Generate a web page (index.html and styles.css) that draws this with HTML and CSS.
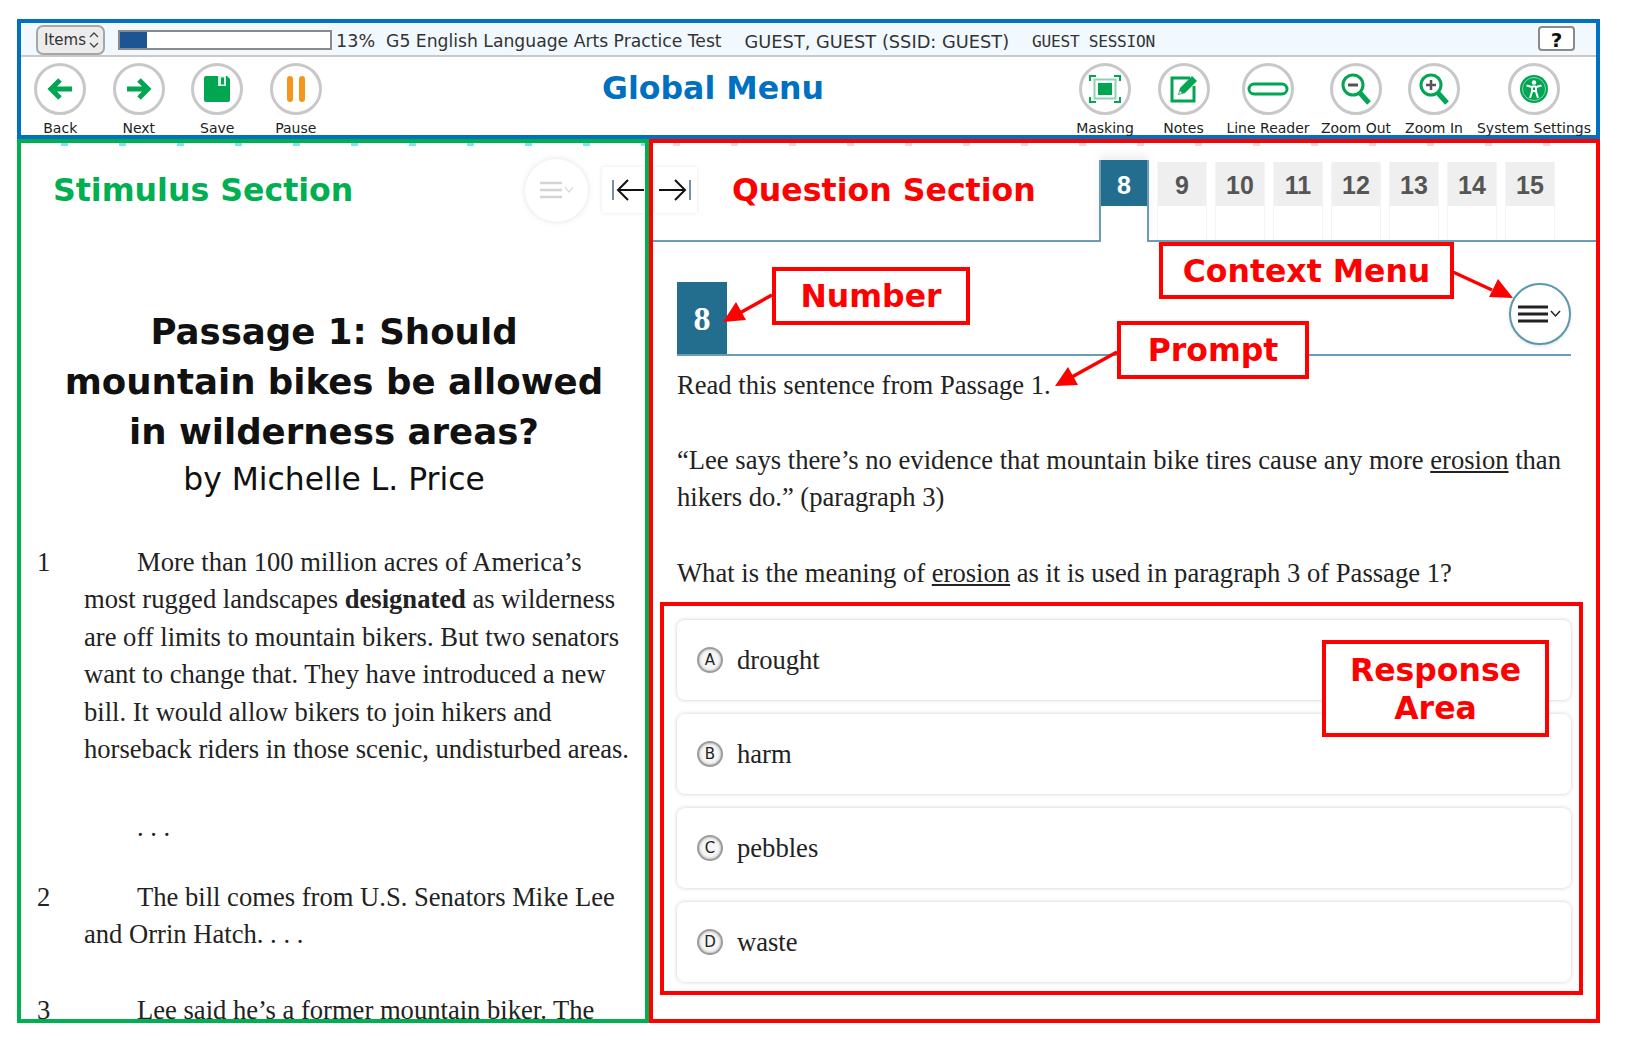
FILE: index.html
```html
<!DOCTYPE html>
<html lang="en">
<head>
    <meta charset="UTF-8">
    <meta name="viewport" content="width=device-width, initial-scale=1.0">
    <title>G5 English Language Arts Practice Test</title>
    <link rel="stylesheet" href="styles.css">
</head>
<body>
    <div class="page">
        <header class="global">
            <div class="info-bar">
                <button class="items-btn">Items
                    <svg width="12" height="20" viewBox="0 0 12 20"><path d="M2 7l4-4 4 4M2 13l4 4 4-4" fill="none" stroke="#444" stroke-width="1.3"/></svg>
                </button>
                <div class="progress"><div class="progress-fill"></div></div>
                <span class="pct">13%</span>
                <span class="test-name">G5 English Language Arts Practice Test</span>
                <span class="student">GUEST, GUEST (SSID: GUEST)</span>
                <span class="session">GUEST SESSION</span>
                <button class="help-btn">?</button>
            </div>
            <div class="toolbar">
                <div class="tools-left">
                    <div class="tool">
                        <div class="tool-circle"><svg width="30" height="30" viewBox="0 0 30 30"><path d="M27 15H7M15 6l-9 9 9 9" fill="none" stroke="#00a651" stroke-width="5"/></svg></div>
                        <span>Back</span>
                    </div>
                    <div class="tool">
                        <div class="tool-circle"><svg width="30" height="30" viewBox="0 0 30 30"><path d="M3 15h20M15 6l9 9-9 9" fill="none" stroke="#00a651" stroke-width="5"/></svg></div>
                        <span>Next</span>
                    </div>
                    <div class="tool">
                        <div class="tool-circle"><svg width="30" height="30" viewBox="0 0 30 30"><path d="M2 4a2 2 0 0 1 2-2h21l3 3v21a2 2 0 0 1-2 2H4a2 2 0 0 1-2-2z" fill="#00a651"/><path d="M16 2h8v10h-8z" fill="#d9f2e4"/><path d="M19 3.500h3v7h-3z" fill="#00a651"/></svg></div>
                        <span>Save</span>
                    </div>
                    <div class="tool">
                        <div class="tool-circle"><svg width="30" height="30" viewBox="0 0 30 30"><rect x="6" y="2" width="6" height="26" rx="3" fill="#f7941d"/><rect x="18" y="2" width="6" height="26" rx="3" fill="#f7941d"/></svg></div>
                        <span>Pause</span>
                    </div>
                </div>
                <div class="global-title">Global Menu</div>
                <div class="tools-right">
                    <div class="tool">
                        <div class="tool-circle"><svg width="34" height="30" viewBox="0 0 34 30"><path d="M2 7V2h6M26 2h6v5M32 23v5h-6M8 28H2v-5" fill="none" stroke="#00a651" stroke-width="2"/><rect x="6.500" y="5.500" width="21" height="19" fill="none" stroke="#8fd3ae" stroke-width="2"/><rect x="10" y="9" width="14" height="12" fill="#00a651"/></svg></div>
                        <span>Masking</span>
                    </div>
                    <div class="tool">
                        <div class="tool-circle"><svg width="32" height="32" viewBox="0 0 32 32"><path d="M22 5H4v23h22V13" fill="none" stroke="#00a651" stroke-width="3"/><path d="M10 22l2-7L24 3l5 5-12 12z" fill="#00a651"/><path d="M11 21l1-3 2 2z" fill="#fff"/></svg></div>
                        <span>Notes</span>
                    </div>
                    <div class="tool">
                        <div class="tool-circle"><svg width="42" height="16" viewBox="0 0 42 16"><rect x="2" y="3" width="38" height="10" rx="5" fill="#fff" stroke="#00a651" stroke-width="3"/></svg></div>
                        <span>Line Reader</span>
                    </div>
                    <div class="tool">
                        <div class="tool-circle"><svg width="32" height="34" viewBox="0 0 32 34"><circle cx="13" cy="13" r="10" fill="none" stroke="#00a651" stroke-width="3"/><path d="M8 13h10" stroke="#555" stroke-width="3"/><path d="M20 21l9 10" stroke="#00a651" stroke-width="5"/></svg></div>
                        <span>Zoom Out</span>
                    </div>
                    <div class="tool">
                        <div class="tool-circle"><svg width="32" height="34" viewBox="0 0 32 34"><circle cx="13" cy="13" r="10" fill="none" stroke="#00a651" stroke-width="3"/><path d="M8 13h10M13 8v10" stroke="#555" stroke-width="2.500"/><path d="M20 21l9 10" stroke="#00a651" stroke-width="5"/></svg></div>
                        <span>Zoom In</span>
                    </div>
                    <div class="tool">
                        <div class="tool-circle"><svg width="30" height="30" viewBox="0 0 30 30"><circle cx="15" cy="15" r="14" fill="#00a651"/><circle cx="15" cy="15" r="11.500" fill="none" stroke="#8fd3ae"/><circle cx="15" cy="8.500" r="2.200" fill="#fff"/><path d="M7.500 11.500l5.500 1.500v4.500L11 24M22.500 11.500L17 13v4.500L19 24M13 12.500h4M13 17h4" fill="none" stroke="#fff" stroke-width="2"/></svg></div>
                        <span>System Settings</span>
                    </div>
                </div>
            </div>
        </header>

        <main class="main">
            <section class="stimulus">
                <div class="section-head">
                    <h2 class="stimulus-title">Stimulus Section</h2>
                    <div class="ghost-menu">
                        <svg width="34" height="18" viewBox="0 0 34 18"><path d="M0 2h22M0 9h22M0 16h22" stroke="#d4d4d4" stroke-width="2.500"/><path d="M25 6l4 5 4-5" fill="none" stroke="#d4d4d4" stroke-width="1.200"/></svg>
                    </div>
                    <div class="collapse-btn">
                        <svg width="34" height="26" viewBox="0 0 34 26"><path d="M2 3v20" stroke="#4a6a8a" stroke-width="1.500"/><path d="M33 13H7M17 3L7 13l10 10" fill="none" stroke="#111" stroke-width="2"/></svg>
                    </div>
                </div>
                <div class="passage-head">
                    <h1>Passage 1: Should<br>mountain bikes be allowed<br>in wilderness areas?</h1>
                    <p>by Michelle L. Price</p>
                </div>
                <div class="para">
                    <span>1</span>
                    <p>More than 100 million acres of America’s<br>most rugged landscapes <b>designated</b> as wilderness<br>are off limits to mountain bikers. But two senators<br>want to change that. They have introduced a new<br>bill. It would allow bikers to join hikers and<br>horseback riders in those scenic, undisturbed areas.</p>
                </div>
                <div class="para ellipsis">
                    <span></span>
                    <p>. . .</p>
                </div>
                <div class="para">
                    <span>2</span>
                    <p>The bill comes from U.S. Senators Mike Lee<br>and Orrin Hatch. . . .</p>
                </div>
                <div class="para">
                    <span>3</span>
                    <p>Lee said he’s a former mountain biker. The</p>
                </div>
            </section>

            <section class="question">
                <div class="question-top">
                    <div class="collapse-btn right">
                        <svg width="36" height="26" viewBox="0 0 34 26"><path d="M32 3v20" stroke="#4a6a8a" stroke-width="1.500"/><path d="M1 13h26M17 3l10 10-10 10" fill="none" stroke="#111" stroke-width="2"/></svg>
                    </div>
                    <h2 class="question-title">Question Section</h2>
                    <div class="tabs">
                        <div class="tab active"><b>8</b></div>
                        <div class="tab"><b>9</b></div>
                        <div class="tab"><b>10</b></div>
                        <div class="tab"><b>11</b></div>
                        <div class="tab"><b>12</b></div>
                        <div class="tab"><b>13</b></div>
                        <div class="tab"><b>14</b></div>
                        <div class="tab"><b>15</b></div>
                    </div>
                </div>
                <div class="question-body">
                    <div class="number-row">
                        <div class="number">8</div>
                        <div class="context-btn">
                            <svg width="44" height="20" viewBox="0 0 44 20"><path d="M0 3h30M0 10h30M0 17h30" stroke="#222" stroke-width="3"/><path d="M33 7l4.500 5 4.500-5" fill="none" stroke="#222" stroke-width="1.500"/></svg>
                        </div>
                    </div>
                    <div class="prompt">
                        <p>Read this sentence from Passage 1.</p>
                        <p>“Lee says there’s no evidence that mountain bike tires cause any more <u>erosion</u> than hikers do.” (paragraph 3)</p>
                        <p>What is the meaning of <u>erosion</u> as it is used in paragraph 3 of Passage 1?</p>
                    </div>
                </div>
                <div class="response-area">
                    <div class="option"><span class="radio">A</span>drought</div>
                    <div class="option"><span class="radio">B</span>harm</div>
                    <div class="option"><span class="radio">C</span>pebbles</div>
                    <div class="option"><span class="radio">D</span>waste</div>
                </div>
            </section>
        </main>

        <div class="callout callout-number">Number</div>
        <div class="callout callout-context">Context Menu</div>
        <div class="callout callout-prompt">Prompt</div>
        <div class="callout callout-response">Response<br>Area</div>
        <svg class="arrows" width="1638" height="1040" viewBox="0 0 1638 1040">
            <path d="M772 295L738 314" stroke="#f00" stroke-width="3.500"/>
            <path d="M723 322l13-20 10 18z" fill="#f00"/>
            <path d="M1453 272L1492 290" stroke="#f00" stroke-width="3.500"/>
            <path d="M1513 298l-24-1 9-18z" fill="#f00"/>
            <path d="M1117 352L1070 378" stroke="#f00" stroke-width="3.500"/>
            <path d="M1055 386l13-19 10 18z" fill="#f00"/>
        </svg>
    </div>
</body>
</html>
```

FILE: styles.css
```css
* {
    box-sizing: border-box;
}
body {
    margin: 0;
    background-color: #fff;
    font-family: "DejaVu Sans", sans-serif;
    color: #222;
}
h1, h2, p {
    margin: 0;
}
.page {
    position: relative;
    width: 1638px;
    height: 1040px;
    padding: 19px 38px 0 17px;
    overflow: hidden;
}

/* global menu */
.global {
    height: 120px;
    border: 4px solid #0070c0;
}
.info-bar {
    display: flex;
    align-items: center;
    height: 34px;
    padding: 2px 21px 0 15px;
    background-color: #f1f9fe;
    border-bottom: 2px solid #c9c9c9;
    font-size: 17.200px;
    color: #333;
}
.info-bar span {
    padding-top: 2px;
}
.items-btn {
    display: flex;
    align-items: center;
    justify-content: space-between;
    width: 69px;
    height: 30px;
    margin-top: -1px;
    padding: 0 3px 0 6px;
    font: 15px "DejaVu Sans", sans-serif;
    color: #333;
    background-color: #ececec;
    border: 2px solid #a6a6a6;
    border-radius: 7px;
}
.progress {
    width: 214px;
    height: 20px;
    margin-left: 13px;
    background-color: #fff;
    border: 2px solid #8a8a8a;
}
.progress-fill {
    width: 13%;
    height: 100%;
    background-color: #1d5493;
}
.pct {
    margin-left: 4px;
    font-size: 17.600px;
}
.test-name {
    margin-left: 11px;
}
.student {
    margin-left: 23px;
    font-size: 17.800px;
}
.session {
    margin-left: 23px;
    font-family: "DejaVu Sans Mono", monospace;
    font-size: 16.200px;
    letter-spacing: -0.300px;
}
.help-btn {
    width: 37px;
    height: 25px;
    margin: 0 0 3px auto;
    padding: 0;
    font: bold 20px "DejaVu Sans", sans-serif;
    color: #111;
    background-color: #fff;
    border: 2px solid #8a8a8a;
    border-radius: 4px;
}
.toolbar {
    display: flex;
    height: 78px;
    padding: 6px 4px 0 0;
}
.tools-left {
    display: grid;
    grid-template-columns: repeat(4, 78.500px);
}
.global-title {
    flex: 1;
    padding: 5px 0 0 267px;
    font-size: 31.600px;
    font-weight: bold;
    line-height: 40px;
    color: #0070c0;
}
.tools-right {
    display: grid;
    grid-template-columns: 92px 65px 104px 72px 84px 116px;
}
.tool {
    display: flex;
    flex-direction: column;
    align-items: center;
    font-size: 14px;
    line-height: 16px;
    color: #222;
    white-space: nowrap;
}
.tool-circle {
    display: flex;
    align-items: center;
    justify-content: center;
    width: 52px;
    height: 52px;
    margin-bottom: 5px;
    background-color: #fff;
    border: 3px solid #c8c8c8;
    border-radius: 50%;
}

/* main two panes */
.main {
    display: flex;
    height: 884px;
}
.stimulus {
    width: 632px;
    padding: 0 0 0 16px;
    overflow: hidden;
    background: repeating-linear-gradient(90deg, #7fe3f5 0 7px, transparent 7px 58px) 40px 0 / 100% 3px no-repeat;
    border: 4px solid #00b050;
}
.section-head {
    display: flex;
    align-items: center;
    height: 94px;
    padding: 0 0 0 16px;
}
.stimulus-title,
.question-title {
    font-size: 31.600px;
    font-weight: bold;
    white-space: nowrap;
}
.stimulus-title {
    flex: 1;
    color: #00b050;
}
.ghost-menu {
    display: flex;
    align-items: center;
    justify-content: center;
    width: 63px;
    height: 63px;
    margin-right: 14px;
    border-radius: 50%;
    box-shadow: 0 0 6px rgba(0, 0, 0, 0.12);
}
.collapse-btn {
    display: flex;
    align-items: center;
    flex-shrink: 0;
    width: 43px;
    height: 46px;
    padding-left: 9px;
    background-color: #fff;
    box-shadow: 0 0 4px rgba(0, 0, 0, 0.1);
}
.passage-head {
    width: 600px;
    margin-top: 70px;
    padding-right: 6px;
    text-align: center;
    color: #111;
}
.passage-head h1 {
    font-size: 35.600px;
    line-height: 50px;
}
.passage-head p {
    font-size: 31.400px;
    line-height: 45px;
}
.para {
    display: grid;
    grid-template-columns: 47px 1fr;
    margin-bottom: 38px;
    font-family: "Liberation Serif", serif;
    font-size: 26.600px;
    line-height: 37.400px;
    color: #222;
    white-space: nowrap;
}
.para p {
    text-indent: 53px;
}
.passage-head + .para {
    margin-top: 42px;
}
.ellipsis {
    margin-top: 41px;
    margin-bottom: 32px;
}

/* question pane */
.question {
    flex: 1;
    background: repeating-linear-gradient(90deg, #dddddd 0 7px, transparent 7px 58px) 20px 0 / 100% 3px no-repeat;
    border: 4px solid #f00;
}
.question-top {
    position: relative;
    display: flex;
    height: 99px;
    padding: 17px 0 0 79px;
    border-bottom: 2px solid #6a9db5;
}
.question-top .collapse-btn.right {
    position: absolute;
    top: 24px;
    left: 2px;
    width: 42px;
    padding-left: 2px;
}
.question-title {
    width: 367px;
    margin-top: 12px;
    color: #f00;
}
.tabs {
    display: flex;
    gap: 8px;
    height: 80px;
}
.tab {
    width: 50px;
    height: 78px;
    margin-top: 2px;
    text-align: center;
    font-family: "Liberation Sans", sans-serif;
    font-size: 25px;
    line-height: 46px;
    color: #555;
    background: linear-gradient(#efefef 44px, #fff 44px);
    border-left: 1px solid #f4f4f4;
    border-right: 1px solid #f4f4f4;
}
.tab.active {
    height: 82px;
    margin-top: 0;
    line-height: 50px;
    color: #fff;
    background: linear-gradient(#236e8e 46px, #fff 46px);
    border-left: 2px solid #6a9db5;
    border-right: 2px solid #6a9db5;
    box-shadow: 0 -6px 8px rgba(0, 0, 0, 0.06);
}
.question-body {
    padding: 40px 25px 0 24px;
}
.number-row {
    display: flex;
    justify-content: space-between;
    height: 74px;
    border-bottom: 2px solid #6a9db5;
}
.number {
    display: flex;
    align-items: center;
    justify-content: center;
    width: 50px;
    height: 72px;
    padding-top: 2px;
    font-family: "Liberation Serif", serif;
    font-size: 34px;
    font-weight: bold;
    color: #fff;
    background-color: #236e8e;
}
.context-btn {
    display: flex;
    align-items: center;
    justify-content: center;
    width: 62px;
    height: 62px;
    margin-top: 1px;
    background-color: #fff;
    border: 2px solid #5b97ae;
    border-radius: 50%;
    box-shadow: 0 1px 3px rgba(0, 0, 0, 0.15);
}
.prompt {
    padding-top: 11px;
    font-family: "Liberation Serif", serif;
    font-size: 26.600px;
    line-height: 37.500px;
    color: #222;
}
.prompt p {
    margin-bottom: 38px;
}
.prompt p:first-child {
    margin-bottom: 37px;
}
.response-area {
    display: flex;
    flex-direction: column;
    gap: 14px;
    width: 923px;
    height: 393px;
    margin: -28px 0 0 7px;
    padding: 14px 8px 0 13px;
    border: 4px solid #f00;
}
.option {
    display: flex;
    align-items: center;
    flex-shrink: 0;
    height: 80px;
    padding-left: 20px;
    font-family: "Liberation Serif", serif;
    font-size: 26.600px;
    color: #222;
    background-color: #fff;
    border-radius: 8px;
    box-shadow: 0 0 4px rgba(0, 0, 0, 0.2);
}
.radio {
    display: flex;
    align-items: center;
    justify-content: center;
    width: 26px;
    height: 26px;
    margin-right: 14px;
    font-family: "DejaVu Sans", sans-serif;
    font-size: 15px;
    color: #222;
    background-color: #f6f6f6;
    border: 2px solid #9c9c9c;
    border-radius: 50%;
    box-shadow: inset 0 0 3px rgba(0, 0, 0, 0.35);
}

/* red callouts drawn over the screenshot */
.callout {
    position: absolute;
    display: flex;
    align-items: center;
    justify-content: center;
    text-align: center;
    font-size: 31.500px;
    font-weight: bold;
    line-height: 38px;
    color: #f00;
    background-color: #fff;
    border: 4px solid #f00;
}
.callout-number {
    left: 772px;
    top: 267px;
    width: 198px;
    height: 58px;
}
.callout-context {
    left: 1159px;
    top: 242px;
    width: 295px;
    height: 57px;
}
.callout-prompt {
    left: 1117px;
    top: 321px;
    width: 192px;
    height: 58px;
}
.callout-response {
    left: 1322px;
    top: 640px;
    width: 227px;
    height: 97px;
}
.arrows {
    position: absolute;
    left: 0;
    top: 0;
    pointer-events: none;
}
```
